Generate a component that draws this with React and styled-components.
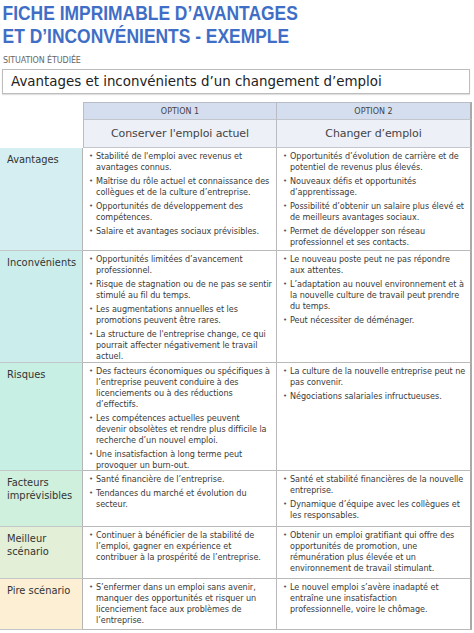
import React from "react";
import styled, { createGlobalStyle } from "styled-components";

const Global = createGlobalStyle`
  html, body { margin: 0; padding: 0; background: #ffffff; }
  body { font-family: "DejaVu Sans", "Noto Sans", sans-serif; color: #333; }
  * { box-sizing: border-box; }
`;

const Page = styled.div`
  width: 474px;
  height: 633px;
  overflow: hidden;
  display: flex;
  flex-direction: column;
`;

const Title = styled.h1`
  margin: 0;
  padding: 1px 0 0 3px;
  font-family: "Liberation Sans", Arial, sans-serif;
  font-weight: 700;
  font-size: 20.5px;
  line-height: 23px;
  color: #3f6ec6;
  white-space: nowrap;
  transform: scaleX(0.85);
  transform-origin: left top;
`;

const FieldLabel = styled.div`
  margin: 9px 0 0 3px;
  font-size: 8px;
  line-height: 10px;
  color: #666;
  letter-spacing: -0.1px;
`;

const Field = styled.div`
  margin: 3px 0 0 2px;
  width: 468px;
  height: 25px;
  border: 1px solid #bdbdbd;
  box-shadow: 0 1px 1px rgba(0, 0, 0, 0.12);
  display: flex;
  align-items: center;
  padding-left: 8px;
  font-size: 13.4px;
  color: #222;
`;

const Table = styled.div`
  margin-top: 8px;
  width: 472px;
  display: flex;
  flex-direction: column;
`;

const Row = styled.div`
  display: grid;
  grid-template-columns: 83px 194px 195px;
  height: ${(p) => p.$h}px;
`;

const Blank = styled.div``;

const HeadCell = styled.div`
  background: ${(p) => (p.$top ? "#d5deef" : "#edf0f7")};
  border-top: ${(p) => (p.$top ? "1px solid #b9bcc4" : "none")};
  border-left: ${(p) => (p.$first ? "1px solid #b9bcc4" : "none")};
  border-right: ${(p) => (p.$last ? "2px solid #a9a9a9" : "1px solid #b9bcc4")};
  border-bottom: 1px solid #c3c6cc;
  display: flex;
  align-items: center;
  justify-content: center;
  color: #444;
  font-size: ${(p) => (p.$top ? "8px" : "11px")};
  letter-spacing: ${(p) => (p.$top ? "0" : "-0.1px")};
`;

const LabelCell = styled.div`
  background: ${(p) => p.$bg};
  border-bottom: 1px solid #c4c7c7;
  border-right: 1px solid #b5b5b5;
  padding: 5px 4px 0 7px;
  font-size: 9.9px;
  line-height: 13px;
  color: #333;
`;

const Cell = styled.div`
  border-right: ${(p) => (p.$last ? "2px solid #a9a9a9" : "1px solid #b9b9b9")};
  border-bottom: 1px solid #b9b9b9;
  padding: 3px 0 0 6px;
  overflow: hidden;
`;

const List = styled.ul`
  margin: 0;
  padding: 0;
  list-style: none;
  display: flex;
  flex-direction: column;
  gap: 3px;
`;

const Item = styled.li`
  display: flex;
  font-size: 8.1px;
  line-height: 11px;
  color: #3a3a3a;
  letter-spacing: -0.05px;
`;

const Dot = styled.span`
  flex: 0 0 7px;
  font-size: 7px;
  color: #555;
`;

const Text = styled.span`
  white-space: pre;
`;

const rows = [
  {
    label: "Avantages",
    bg: "#d4eef2",
    h: 103,
    a: [
      "Stabilité de l'emploi avec revenus et\navantages connus.",
      "Maîtrise du rôle actuel et connaissance des\ncollègues et de la culture d’entreprise.",
      "Opportunités de développement des\ncompétences.",
      "Salaire et avantages sociaux prévisibles.",
    ],
    b: [
      "Opportunités d’évolution de carrière et de\npotentiel de revenus plus élevés.",
      "Nouveaux défis et opportunités\nd’apprentissage.",
      "Possibilité d’obtenir un salaire plus élevé et\nde meilleurs avantages sociaux.",
      "Permet de développer son réseau\nprofessionnel et ses contacts.",
    ],
  },
  {
    label: "Inconvénients",
    bg: "#cbeeed",
    h: 112,
    a: [
      "Opportunités limitées d’avancement\nprofessionnel.",
      "Risque de stagnation ou de ne pas se sentir\nstimulé au fil du temps.",
      "Les augmentations annuelles et les\npromotions peuvent être rares.",
      "La structure de l'entreprise change, ce qui\npourrait affecter négativement le travail\nactuel.",
    ],
    b: [
      "Le nouveau poste peut ne pas répondre\naux attentes.",
      "L’adaptation au nouvel environnement et à\nla nouvelle culture de travail peut prendre\ndu temps.",
      "Peut nécessiter de déménager.",
    ],
  },
  {
    label: "Risques",
    bg: "#c7efe4",
    h: 108,
    a: [
      "Des facteurs économiques ou spécifiques à\nl’entreprise peuvent conduire à des\nlicenciements ou à des réductions\nd’effectifs.",
      "Les compétences actuelles peuvent\ndevenir obsolètes et rendre plus difficile la\nrecherche d’un nouvel emploi.",
      "Une insatisfaction à long terme peut\nprovoquer un burn-out.",
    ],
    b: [
      "La culture de la nouvelle entreprise peut ne\npas convenir.",
      "Négociations salariales infructueuses.",
    ],
  },
  {
    label: "Facteurs imprévisibles",
    bg: "#cff0dc",
    h: 56,
    a: [
      "Santé financière de l’entreprise.",
      "Tendances du marché et évolution du\nsecteur.",
    ],
    b: [
      "Santé et stabilité financières de la nouvelle\nentreprise.",
      "Dynamique d’équipe avec les collègues et\nles responsables.",
    ],
  },
  {
    label: "Meilleur scénario",
    bg: "#e3efd6",
    h: 52,
    a: [
      "Continuer à bénéficier de la stabilité de\nl’emploi, gagner en expérience et\ncontribuer à la prospérité de l’entreprise.",
    ],
    b: [
      "Obtenir un emploi gratifiant qui offre des\nopportunités de promotion, une\nrémunération plus élevée et un\nenvironnement de travail stimulant.",
    ],
  },
  {
    label: "Pire scénario",
    bg: "#fcefd3",
    h: 51,
    a: [
      "S’enfermer dans un emploi sans avenir,\nmanquer des opportunités et risquer un\nlicenciement face aux problèmes de\nl’entreprise.",
    ],
    b: [
      "Le nouvel emploi s’avère inadapté et\nentraîne une insatisfaction\nprofessionnelle, voire le chômage.",
    ],
  },
];

function Bullets({ items }) {
  return (
    <List>
      {items.map((t, i) => (
        <Item key={i}>
          <Dot>•</Dot>
          <Text>{t}</Text>
        </Item>
      ))}
    </List>
  );
}

export default function App() {
  return (
    <>
      <Global />
      <Page>
        <Title>
          FICHE IMPRIMABLE D’AVANTAGES
          <br />
          ET D’INCONVÉNIENTS - EXEMPLE
        </Title>
        <FieldLabel>SITUATION ÉTUDIÉE</FieldLabel>
        <Field>Avantages et inconvénients d’un changement d’emploi</Field>
        <Table>
          <Row $h={18}>
            <Blank />
            <HeadCell $top $first>OPTION 1</HeadCell>
            <HeadCell $top $last>OPTION 2</HeadCell>
          </Row>
          <Row $h={28}>
            <Blank />
            <HeadCell $first>Conserver l'emploi actuel</HeadCell>
            <HeadCell $last>Changer d’emploi</HeadCell>
          </Row>
          {rows.map((r) => (
            <Row key={r.label} $h={r.h}>
              <LabelCell $bg={r.bg}>{r.label}</LabelCell>
              <Cell>
                <Bullets items={r.a} />
              </Cell>
              <Cell $last>
                <Bullets items={r.b} />
              </Cell>
            </Row>
          ))}
        </Table>
      </Page>
    </>
  );
}
